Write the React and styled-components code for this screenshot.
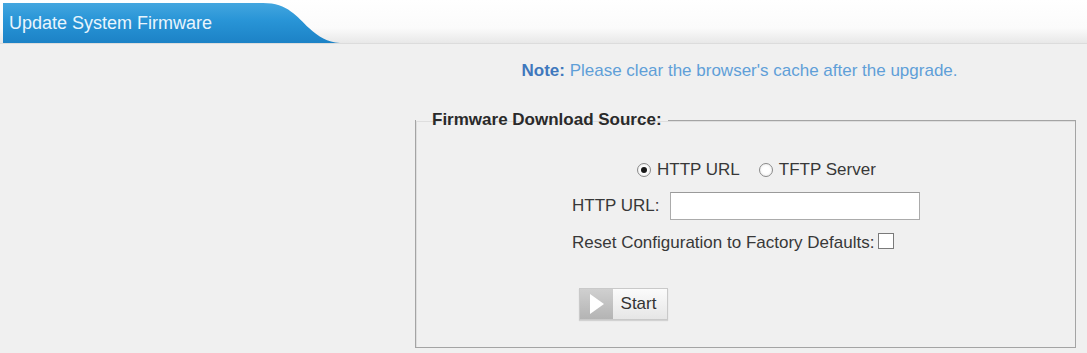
import React from "react";
import styled, { createGlobalStyle } from "styled-components";

const GlobalStyle = createGlobalStyle`
  html, body {
    margin: 0;
    padding: 0;
    background: #f0f0f0;
    font-family: "Liberation Sans", Arial, sans-serif;
  }
`;

const Page = styled.div`
  width: 1087px;
  min-height: 353px;
  background: #f0f0f0;
`;

const Header = styled.div`
  height: 44px;
  display: flex;
  align-items: flex-end;
  padding-left: 3px;
  background: linear-gradient(#ffffff 0%, #fbfbfb 65%, #e8e8e8 100%);
  border-bottom: 1px solid #dcdcdc;
  box-sizing: border-box;
`;

const Tab = styled.div`
  width: 337px;
  height: 40px;
  display: flex;
  align-items: center;
  padding-left: 6px;
  box-sizing: border-box;
  font-size: 18px;
  color: #e8f5fd;
  white-space: nowrap;
  background: linear-gradient(#43a6df 0%, #2894d6 45%, #1c82c6 100%);
  clip-path: path("M0,0 H260 C285,0 294,14 306,25 C316,34 324,39 337,40 H0 Z");
`;

const Main = styled.div`
  margin-left: 415px;
  width: 661px;
  display: flex;
  flex-direction: column;
`;

const Note = styled.p`
  margin: 17px 0 0 0;
  padding-right: 12px;
  text-align: center;
  font-size: 17px;
  line-height: 20px;
  color: #5f9fd8;
  white-space: nowrap;
  strong {
    color: #3f78bd;
    font-weight: bold;
  }
`;

const Fieldset = styled.fieldset`
  margin: 29px 0 0 0;
  padding: 30px 0 27px 0;
  border: 1px solid #a4a4a4;
  box-shadow: inset 1px 1px 0 #dedede;
  display: flex;
  flex-direction: column;
  align-items: center;
  min-width: 0;
`;

const Legend = styled.legend`
  margin-left: 0;
  padding: 0 6px 0 16px;
  font-size: 17px;
  line-height: 20px;
  font-weight: bold;
  color: #2a2a2a;
  white-space: nowrap;
`;

const FormBlock = styled.div`
  width: 347px;
  display: flex;
  flex-direction: column;
  align-items: flex-start;
  font-size: 17px;
  color: #383838;
  white-space: nowrap;
`;

const RadioRow = styled.div`
  display: flex;
  align-items: center;
  height: 20px;
  padding-left: 65px;
  gap: 19px;
`;

const RadioLabel = styled.label`
  display: flex;
  align-items: center;
  gap: 6px;
  line-height: 20px;
`;

const RadioDot = styled.span`
  width: 14px;
  height: 14px;
  box-sizing: border-box;
  border-radius: 50%;
  border: 1px solid #8a8a8a;
  background: radial-gradient(circle, #ffffff 40%, #e4e4e4 100%);
  display: flex;
  align-items: center;
  justify-content: center;
  &::after {
    content: "";
    width: 6px;
    height: 6px;
    border-radius: 50%;
    background: ${(p) => (p.$checked ? "#1a1a1a" : "transparent")};
  }
`;

const FieldRow = styled.div`
  display: flex;
  align-items: center;
  margin-top: ${(p) => p.$mt}px;
  gap: ${(p) => p.$gap}px;
  line-height: 20px;
`;

const FieldLabel = styled.span`
  flex-shrink: 0;
  white-space: nowrap;
`;

const TextInput = styled.input`
  flex-shrink: 0;
  width: 250px;
  height: 28px;
  box-sizing: border-box;
  border: 1px solid #ababab;
  border-top-color: #9a9a9a;
  background: #fff;
  padding: 0 4px;
  font: inherit;
  outline: none;
`;

const CheckBox = styled.span`
  flex-shrink: 0;
  width: 16px;
  height: 16px;
  box-sizing: border-box;
  border: 1px solid #7a7a7a;
  background: #fff;
  margin-top: -4px;
`;

const StartButton = styled.button`
  margin-top: 35px;
  margin-left: 7px;
  width: 89px;
  height: 32px;
  padding: 0;
  display: flex;
  align-items: stretch;
  border: 1px solid #c9c9c9;
  background: linear-gradient(#fbfbfb, #e6e6e6);
  box-shadow: 0 1px 1px rgba(0, 0, 0, 0.12);
  cursor: pointer;
  font: inherit;
  color: #333;
`;

const PlayPart = styled.span`
  width: 33px;
  display: flex;
  align-items: center;
  justify-content: center;
  background: linear-gradient(#d0d0d0, #b4b4b4);
`;

const StartText = styled.span`
  flex: 1;
  display: flex;
  align-items: center;
  justify-content: center;
  font-size: 17px;
  padding-right: 3px;
`;

export default function App() {
  return (
    <Page>
      <GlobalStyle />
      <Header>
        <Tab>Update System Firmware</Tab>
      </Header>
      <Main>
        <Note>
          <strong>Note:</strong> Please clear the browser's cache after the upgrade.
        </Note>
        <Fieldset>
          <Legend>Firmware Download Source:</Legend>
          <FormBlock>
            <RadioRow>
              <RadioLabel>
                <RadioDot $checked />
                HTTP URL
              </RadioLabel>
              <RadioLabel>
                <RadioDot />
                TFTP Server
              </RadioLabel>
            </RadioRow>
            <FieldRow $mt={12} $gap={10}>
              <FieldLabel>HTTP URL:</FieldLabel>
              <TextInput type="text" />
            </FieldRow>
            <FieldRow $mt={13} $gap={4}>
              <FieldLabel>Reset Configuration to Factory Defaults:</FieldLabel>
              <CheckBox />
            </FieldRow>
            <StartButton type="button">
              <PlayPart>
                <svg width="14" height="20" viewBox="0 0 14 20">
                  <path d="M0 0 L14 10 L0 20 Z" fill="#ffffff" />
                </svg>
              </PlayPart>
              <StartText>Start</StartText>
            </StartButton>
          </FormBlock>
        </Fieldset>
      </Main>
    </Page>
  );
}
